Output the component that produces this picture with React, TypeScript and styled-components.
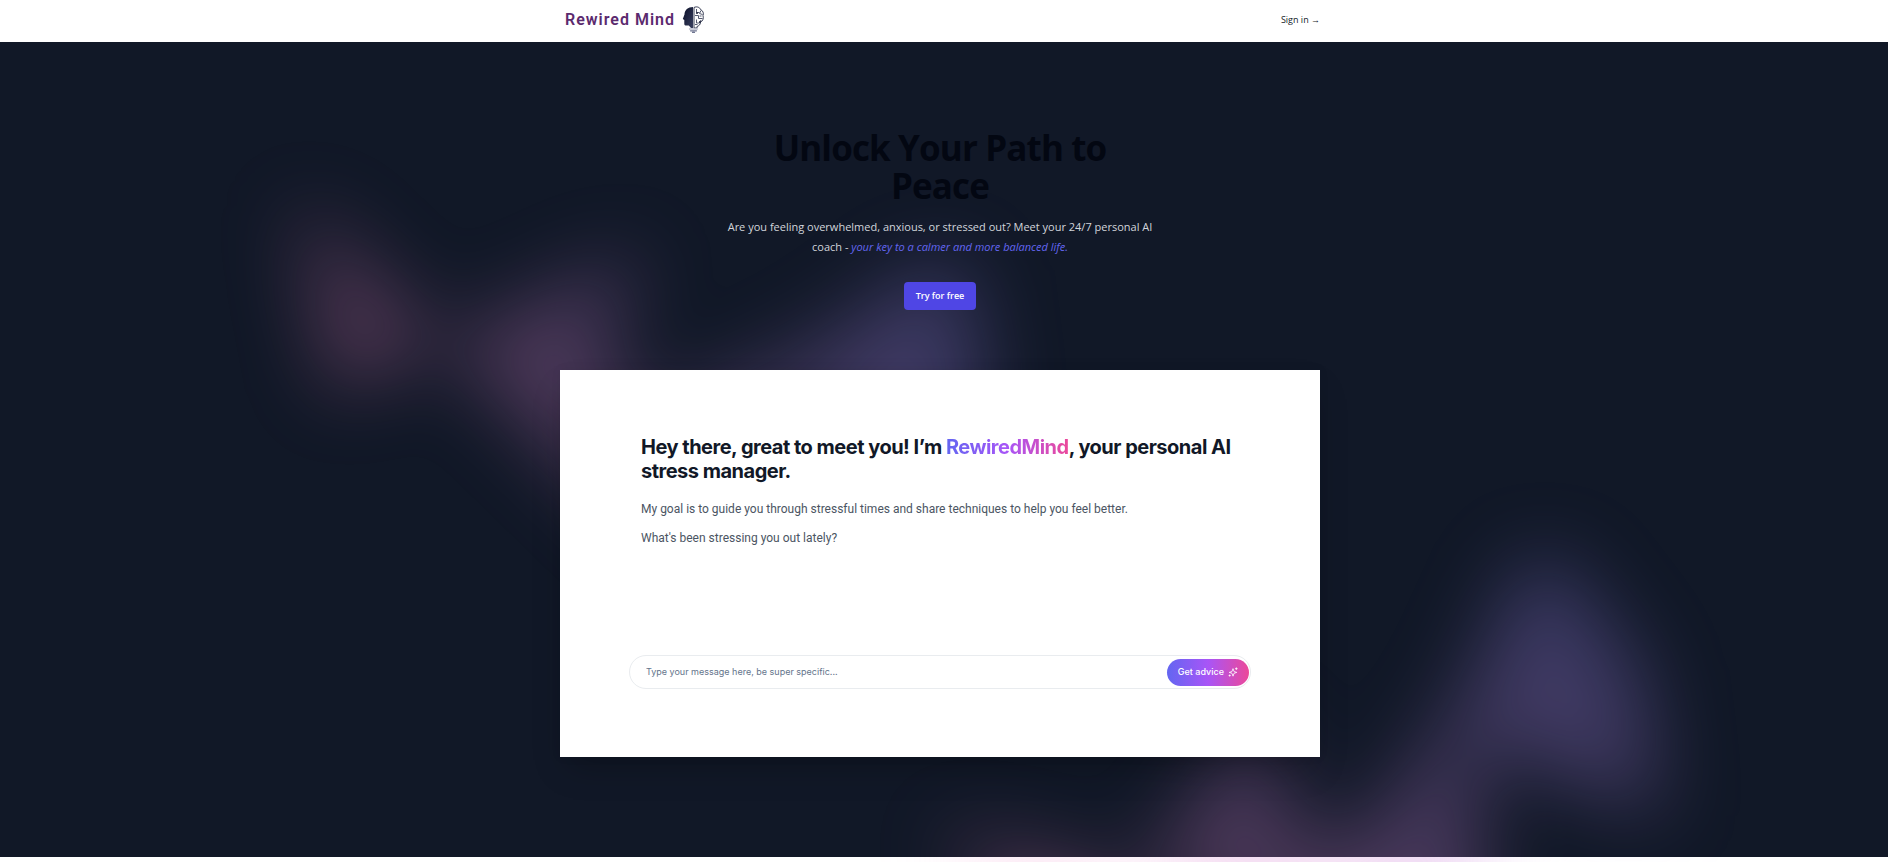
import React from 'react';
import styled, { createGlobalStyle } from 'styled-components';

const ui = "'Open Sans', 'Noto Sans', sans-serif";
const inter = "Inter, 'Liberation Sans', sans-serif";

const GlobalStyle = createGlobalStyle`
  *, *::before, *::after { box-sizing: border-box; }
  body { margin: 0; background: #fff; font-family: ${ui}; overflow-x: hidden; }
  h1, h2, p { margin: 0; }
`;

const Page = styled.div`
  overflow: hidden;
  padding-bottom: 5px;
`;

const TopBar = styled.header`
  padding: 0 28px 0 20px;
`;

const Nav = styled.nav`
  display: flex;
  align-items: flex-start;
  justify-content: space-between;
  max-width: 760px;
  height: 42px;
  margin: 0 auto;
  padding: 4px 0 0 5px;
`;

const Brand = styled.a`
  display: flex;
  align-items: center;
  gap: 7px;
  height: 32px;
  font: 600 16px/32px Roboto, sans-serif;
  letter-spacing: 1px;
  color: #5b2a6e;
  text-decoration: none;
`;

const SignIn = styled.a`
  font-size: 9px;
  line-height: 32px;
  color: #111827;
  text-decoration: none;
`;

const Hero = styled.main`
  position: relative;
  isolation: isolate;
  padding: 87px 28px 100px 20px;
  background: #111827;
`;

const Glow = styled.div<{ $place: 'upper' | 'lower' }>`
  position: absolute;
  z-index: ${p => (p.$place === 'lower' ? 0 : -1)};
  top: ${p => (p.$place === 'lower' ? 'calc(100% - 300px)' : '72px')};
  left: ${p => (p.$place === 'lower' ? 'calc(50% + 356px)' : 'calc(50% - 304px)')};
  width: 722px;
  aspect-ratio: 1155 / 678;
  transform: translateX(-50%);
  filter: blur(40px);
  pointer-events: none;

  &::before {
    content: '';
    display: block;
    height: 100%;
    opacity: 0.3;
    background: linear-gradient(to top right, #ff80b5, #9089fc);
    transform: ${p => (p.$place === 'lower' ? 'none' : 'rotate(30deg)')};
    clip-path: polygon(74.1% 44.1%, 100% 61.6%, 97.5% 26.9%, 85.5% 0.1%, 80.7% 2%, 72.5% 32.5%, 60.2% 62.4%, 52.4% 68.1%, 47.5% 58.3%, 45.2% 34.5%, 27.5% 76.7%, 0.1% 64.9%, 17.9% 100%, 27.6% 76.8%, 76.1% 97.7%, 74.1% 44.1%);
  }
`;

const Intro = styled.section`
  position: relative;
  z-index: 1;
  display: flex;
  flex-direction: column;
  align-items: center;
  max-width: 440px;
  margin: 0 auto 60px;
  text-align: center;
`;

const Title = styled.h1`
  max-width: 400px;
  font-size: 35px;
  line-height: 38px;
  font-weight: 700;
  letter-spacing: -0.025em;
  color: #030712;
`;

const Lead = styled.p`
  margin: 12px 0 25px;
  font-size: 11px;
  line-height: 20px;
  color: #d1d5db;

  em { color: #6366f1; }
`;

const TryButton = styled.button`
  height: 28px;
  padding: 0 12px;
  border: 0;
  border-radius: 4px;
  background: #4f46e5;
  color: #fff;
  font: 600 9px/20px ${ui};
`;

const Card = styled.section`
  position: relative;
  z-index: 1;
  display: flex;
  flex-direction: column;
  max-width: 760px;
  margin: 0 auto;
  padding: 65px 69px 68px;
  background: #fff;
  box-shadow: 0 16px 32px -8px rgba(0, 0, 0, 0.25), 0 0 10px rgba(0, 0, 0, 0.06);
  font-family: ${inter};
`;

const Message = styled.div`
  display: flex;
  flex-direction: column;
  gap: 13px;
  padding: 0 12px;
`;

const Greeting = styled.h2`
  margin-bottom: 5px;
  font-size: 20px;
  line-height: 24px;
  font-weight: 700;
  letter-spacing: -0.025em;
  color: #111827;
`;

const Gradient = styled.span`
  background: linear-gradient(to right, #6366f1, #a855f7, #ec4899);
  background-clip: text;
  -webkit-background-clip: text;
  color: transparent;
`;

const Text = styled.p`
  font-family: Roboto, ${inter};
  font-size: 12px;
  line-height: 16px;
  color: #4b5563;
`;

const Form = styled.form`
  display: flex;
  align-items: center;
  height: 34px;
  margin-top: 109px;
  padding: 0 1px 0 16px;
  border: 1px solid #e9ecef;
  border-radius: 17px;
`;

const Input = styled.input`
  flex: 1;
  min-width: 0;
  padding: 0;
  border: 0;
  outline: 0;
  background: none;
  font: 400 9px/16px ${inter};
  color: #111827;

  &::placeholder { color: #64748b; opacity: 1; }
`;

const Advice = styled.button`
  display: flex;
  align-items: center;
  gap: 4px;
  height: 27px;
  padding: 0 11px;
  border: 0;
  border-radius: 14px;
  background: linear-gradient(to right, #6366f1, #a855f7, #ec4899);
  color: #fff;
  font: 500 9px/16px ${inter};
`;

const HeadLogo = () => (
  <svg width="24" height="28" viewBox="0 0 24 28" aria-hidden="true">
    <defs>
      <linearGradient id="face" x1="0" y1="0" x2="1" y2="1">
        <stop offset="0" stopColor="#080d26" />
        <stop offset="1" stopColor="#39405f" />
      </linearGradient>
    </defs>
    <path d="M11 1C6 1 2.500 4 2.500 8.500L.8 13l1.500 1v4c0 1 1 1.500 2 1.500h2.500L9 22h2z" fill="url(#face)" />
    <path d="M12 1.500c3-1.500 6 0 6.500 2 2.500 1 3.500 4 2.500 6 1 3-.5 6-2.500 6.500 0 3-2 4-3.500 4.500v1.500h-3z" fill="#fff" stroke="#3b4057" strokeWidth="1" />
    <path d="M14.500 3v3.500h3M19 4.500l-1.500 3 3 1M13 9.500h3.500v3h4M14.500 13.500v3.500h3l1.500-3M13 18.500h2.500M17.500 10h2" fill="none" stroke="#555a70" strokeWidth="1" />
    <circle cx="15" cy="7" r="1" fill="#20263d" />
    <circle cx="18" cy="16" r="1" fill="#20263d" />
    <path d="M7.500 23h8" stroke="#b9bccb" strokeWidth="1.400" strokeLinecap="round" />
    <path d="M8.500 24.800h6M10.500 26.400h2" stroke="#6f7591" strokeWidth="1.200" strokeLinecap="round" />
  </svg>
);

const Sparkles = () => (
  <svg width="10" height="10" viewBox="0 0 24 24" fill="none" stroke="currentColor" strokeWidth="2" strokeLinejoin="round" aria-hidden="true">
    <path d="M12 4l2.500 7 6.500 2-6.500 2-2.500 7-2.500-7L3 13l6.500-2z" />
    <path d="M20 1v6M17 4h6M4 18v5M1.500 20.500h5" />
  </svg>
);

export default function App() {
  return (
    <Page>
      <GlobalStyle />
      <TopBar>
        <Nav>
          <Brand href="#">Rewired Mind <HeadLogo /></Brand>
          <SignIn href="#">Sign in →</SignIn>
        </Nav>
      </TopBar>
      <Hero>
        <Glow $place="upper" />
        <Glow $place="lower" />
        <Intro>
          <Title>Unlock Your Path to Peace</Title>
          <Lead>
            Are you feeling overwhelmed, anxious, or stressed out? Meet your 24/7 personal AI coach - <em>your key to a calmer and more balanced life.</em>
          </Lead>
          <TryButton type="button">Try for free</TryButton>
        </Intro>
        <Card>
          <Message>
            <Greeting>
              Hey there, great to meet you! I’m <Gradient>RewiredMind</Gradient>, your personal AI stress manager.
            </Greeting>
            <Text>My goal is to guide you through stressful times and share techniques to help you feel better.</Text>
            <Text>What's been stressing you out lately?</Text>
          </Message>
          <Form onSubmit={e => e.preventDefault()}>
            <Input aria-label="Your message" placeholder="Type your message here, be super specific..." />
            <Advice type="submit">Get advice <Sparkles /></Advice>
          </Form>
        </Card>
      </Hero>
    </Page>
  );
}
